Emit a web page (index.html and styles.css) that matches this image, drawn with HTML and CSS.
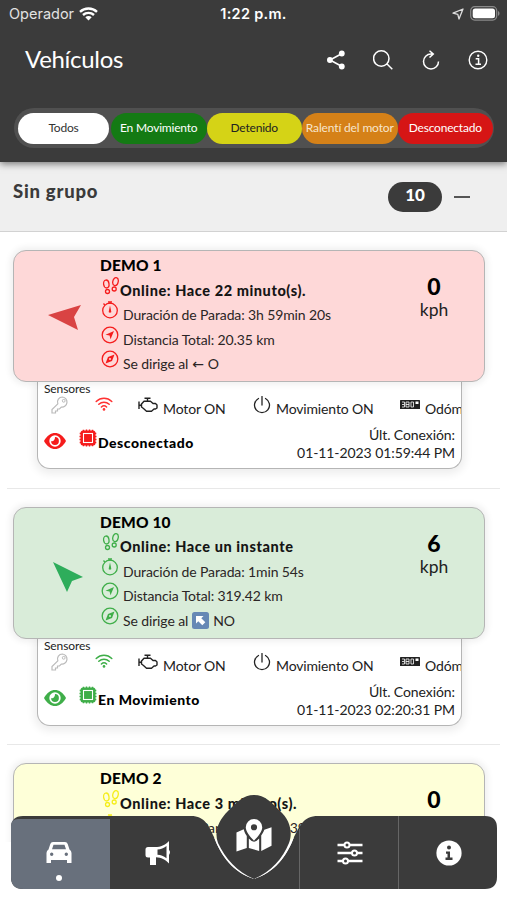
FILE: index.html
```
<!DOCTYPE html>
<html lang="es">
<head>
  <meta charset="UTF-8" />
  <meta name="viewport" content="width=device-width, initial-scale=1" />
  <title>Vehículos</title>
  <link rel="stylesheet" href="styles.css">
</head>
<body>
  <!-- Iconos compartidos -->
  <svg class="sprite" aria-hidden="true">
    <symbol id="steps" viewBox="0 0 18 18"><g fill="none" stroke="currentColor" stroke-width="1.3"><ellipse cx="4.3" cy="7" rx="2.7" ry="4" transform="rotate(-8 4.3 7)"/><circle cx="5.500" cy="14.500" r="2"/><ellipse cx="13.500" cy="4.600" rx="2.700" ry="4" transform="rotate(12 13.500 4.600)"/><circle cx="12.200" cy="12" r="2"/></g></symbol>
    <symbol id="timer" viewBox="0 0 18 18"><g fill="none" stroke="currentColor" stroke-width="1.3"><circle cx="9" cy="9.500" r="7.300"/><path d="M7 1h4M9 1v2M2.500 2.500l1.300 1.500" /></g><path d="M9 4.500l1.200 5.500a1.300 1.300 0 1 1-2.400 0z" fill="currentColor"/></symbol>
    <symbol id="distance" viewBox="0 0 18 18"><circle cx="9" cy="9" r="7.800" fill="none" stroke="currentColor" stroke-width="1.300"/><path d="M13 5L9.500 13.300 8.600 9.500 4.500 8.700z" fill="currentColor"/></symbol>
    <symbol id="compass" viewBox="0 0 18 18"><circle cx="9" cy="9" r="7.800" fill="none" stroke="currentColor" stroke-width="1.300"/><path fill-rule="evenodd" d="M13.500 4.500L11 11 4.500 13.500 7 7zM9 8a1 1 0 1 0 0 2 1 1 0 0 0 0-2z" fill="currentColor"/></symbol>
    <symbol id="key" viewBox="0 0 18 18"><path d="M11.500 1a5 5 0 0 0-4.700 6.800L1 13.600V17h3.500v-2H6.500v-2h2l1.800-1.900A5 5 0 1 0 11.500 1z" fill="none" stroke="currentColor" stroke-width="1.200"/><circle cx="12.700" cy="4.800" r="1.400" fill="none" stroke="currentColor"/></symbol>
    <symbol id="wifi" viewBox="0 0 18 14"><g fill="none" stroke="currentColor" stroke-width="1.500" stroke-linecap="round"><path d="M1.200 4.500c4.500-4.200 11.100-4.200 15.600 0M3.800 7.300c3-2.800 7.400-2.800 10.400 0M6.400 10c1.500-1.400 3.700-1.400 5.200 0"/></g><circle cx="9" cy="12.400" r="1.300" fill="currentColor"/></symbol>
    <symbol id="engine" viewBox="0 0 20 16"><path d="M6 4.200h6.500L15 6.500h2.500L19 8v3l-1.500 1H16l-2.500 2.200H8.500L5.500 11.500 3.500 10V7zM9.500 4V1.500M6.500 1.300h6M1 4.500v7.500M1 8.300h2.500" fill="none" stroke="currentColor" stroke-width="1.400" stroke-linejoin="round"/></symbol>
    <symbol id="power" viewBox="0 0 18 18"><path d="M5.500 2.500a7.500 7.500 0 1 0 7 0M9 .5v8.500" fill="none" stroke="currentColor" stroke-width="1.300" stroke-linecap="round"/></symbol>
    <symbol id="odometer" viewBox="0 0 20 10"><rect width="20" height="9" rx=".6" fill="currentColor"/><path d="M2 2h2.500v5H2M2 4.500h2M6 2h3v5H6zM6 4.500h3M11 2h2.500v5H11z" fill="none" stroke="#fff" stroke-width=".8"/><path d="M15.500 1.500h3v2.500h-3z" fill="#fff"/></symbol>
    <symbol id="eye" viewBox="0 0 22 16"><path d="M0 8C3 2.500 7 0 11 0s8 2.500 11 8c-3 5.500-7 8-11 8S3 13.500 0 8z" fill="currentColor"/><circle cx="11" cy="8" r="5.700" fill="#fff"/><path d="M11 4.100a3.900 3.900 0 1 1-3.900 3.900c1.800 1 4-.8 3.900-3.900z" fill="currentColor"/></symbol>
    <symbol id="chip" viewBox="0 0 18 18"><rect x="1.500" y="1.500" width="15" height="15" rx="2.500" fill="currentColor"/><path d="M4.500 .7v16.600M7.500 .5v17M10.500 .5v17M13.500 .7v16.600M.7 4.500h16.600M.5 7.500h17M.5 10.500h17M.7 13.500h16.600" stroke="currentColor" stroke-width="1.500"/><rect x="4.500" y="4.500" width="9" height="9" fill="currentColor" stroke="#fff" stroke-width="1.100"/></symbol>
  </svg>

  <div class="app">
    <header class="header">
      <div class="status-bar">
        <div class="carrier">Operador
          <svg width="19" height="14" viewBox="0 0 19 14"><g fill="none" stroke="#fff" stroke-width="2.400"><path d="M1 4.800c4.800-4.400 12.200-4.400 17 0M4 8c3.100-2.900 7.900-2.900 11 0"/></g><path d="M6.300 10.300c1.900-1.600 4.500-1.600 6.400 0L9.500 13.600z" fill="#fff"/></svg>
        </div>
        <div class="clock">1:22 p.m.</div>
        <div class="battery">
          <svg width="12" height="12" viewBox="0 0 12 12"><path d="M11 1L7 11 5.800 6.300 1 5.200z" fill="none" stroke="#ddd" stroke-width="1.300" stroke-linejoin="round"/></svg>
          <svg width="30" height="15" viewBox="0 0 30 15"><rect x=".7" y=".7" width="26" height="13.400" rx="4" fill="none" stroke="#8a8a8a" stroke-width="1.200"/><rect x="2.700" y="2.500" width="22.300" height="9.800" rx="2.500" fill="#fff"/><path d="M28 5c2 .8 2 4 0 4.800z" fill="#8a8a8a"/></svg>
        </div>
      </div>
      <div class="title-row">
        <h1>Vehículos</h1>
        <div class="actions">
          <svg width="20" height="20" viewBox="0 0 20 20"><path d="M16 3.500L4 10l12 6.500" fill="none" stroke="#fff" stroke-width="1.600"/><g fill="#fff"><circle cx="15.800" cy="3.500" r="2.900"/><circle cx="3.900" cy="10" r="2.900"/><circle cx="15.800" cy="16.500" r="2.900"/></g></svg>
          <svg width="20" height="20" viewBox="0 0 20 20"><path d="M13.800 13.800L19.300 19.300M16 8.500a7.700 7.700 0 1 1-15.400 0 7.700 7.700 0 0 1 15.400 0z" fill="none" stroke="#fff" stroke-width="1.500"/></svg>
          <svg width="20" height="20" viewBox="0 0 20 20"><path d="M11.500 4H10a7.500 7.500 0 1 0 7.500 7.500M8.500 .7L12.300 4 8.500 7.500" fill="none" stroke="#fff" stroke-width="1.500"/></svg>
          <svg width="20" height="20" viewBox="0 0 20 20"><circle cx="10" cy="10" r="8.800" fill="none" stroke="#fff" stroke-width="1.400"/><path d="M7.700 8.700h2.900v5.600M7.500 14.300h5.500" fill="none" stroke="#fff" stroke-width="1.500"/><circle cx="10.200" cy="5.700" r="1.200" fill="#fff"/></svg>
        </div>
      </div>
      <nav class="filters">
        <span class="filter all">Todos</span>
        <span class="filter moving">En Movimiento</span>
        <span class="filter stopped">Detenido</span>
        <span class="filter idle">Ralentí del motor</span>
        <span class="filter offline">Desconectado</span>
      </nav>
    </header>

    <section class="group">
      <h2>Sin grupo</h2>
      <span class="count">10</span>
      <span class="collapse"></span>
    </section>

    <main class="list">
      <!-- DEMO 1 -->
      <article class="vehicle red">
        <div class="summary">
          <div class="heading"><svg width="36" height="30" viewBox="0 0 36 30"><path d="M1 13L34 3 27 15 31 28z" fill="#d94343"/></svg></div>
          <div class="info">
            <h3>DEMO 1</h3>
            <p class="online"><svg><use href="#steps"/></svg>Online: Hace 22 minuto(s).</p>
            <p><svg><use href="#timer"/></svg>Duración de Parada: 3h 59min 20s</p>
            <p><svg><use href="#distance"/></svg>Distancia Total: 20.35 km</p>
            <p><svg><use href="#compass"/></svg>Se dirige al <span class="west">←</span> O</p>
          </div>
          <div class="speed"><b>0</b>kph</div>
        </div>
        <div class="details">
          <div class="label">Sensores</div>
          <div class="sensors">
            <svg class="key"><use href="#key"/></svg>
            <svg class="wifi"><use href="#wifi"/></svg>
            <svg class="engine"><use href="#engine"/></svg><span class="motor">Motor ON</span>
            <svg class="power"><use href="#power"/></svg><span class="motion">Movimiento ON</span>
            <svg class="odometer"><use href="#odometer"/></svg><span>Odóm</span>
          </div>
          <div class="state">
            <svg class="eye"><use href="#eye"/></svg>
            <svg class="chip"><use href="#chip"/></svg>
            <strong>Desconectado</strong>
            <div class="last">Últ. Conexión:<br>01-11-2023 01:59:44 PM</div>
          </div>
        </div>
      </article>

      <!-- DEMO 10 -->
      <article class="vehicle green">
        <div class="summary">
          <div class="heading"><svg width="36" height="36" viewBox="0 0 36 36"><path d="M4 3L34 18 23 22 18 33z" fill="#2ead5b"/></svg></div>
          <div class="info">
            <h3>DEMO 10</h3>
            <p class="online"><svg><use href="#steps"/></svg>Online: Hace un instante</p>
            <p><svg><use href="#timer"/></svg>Duración de Parada: 1min 54s</p>
            <p><svg><use href="#distance"/></svg>Distancia Total: 319.42 km</p>
            <p><svg><use href="#compass"/></svg>Se dirige al <svg class="northwest" viewBox="0 0 17 17"><rect width="17" height="17" rx="2.500" fill="#6688b5"/><path d="M4 4h7.500L9.300 6.200l4 4-3 3-4-4L4 11.500z" fill="#fff"/></svg> NO</p>
          </div>
          <div class="speed"><b>6</b>kph</div>
        </div>
        <div class="details">
          <div class="label">Sensores</div>
          <div class="sensors">
            <svg class="key"><use href="#key"/></svg>
            <svg class="wifi"><use href="#wifi"/></svg>
            <svg class="engine"><use href="#engine"/></svg><span class="motor">Motor ON</span>
            <svg class="power"><use href="#power"/></svg><span class="motion">Movimiento ON</span>
            <svg class="odometer"><use href="#odometer"/></svg><span>Odóm</span>
          </div>
          <div class="state">
            <svg class="eye"><use href="#eye"/></svg>
            <svg class="chip"><use href="#chip"/></svg>
            <strong>En Movimiento</strong>
            <div class="last">Últ. Conexión:<br>01-11-2023 02:20:31 PM</div>
          </div>
        </div>
      </article>

      <!-- DEMO 2 -->
      <article class="vehicle yellow">
        <div class="summary">
          <div class="heading"></div>
          <div class="info">
            <h3>DEMO 2</h3>
            <p class="online"><svg><use href="#steps"/></svg>Online: Hace 3 minuto(s).</p>
            <p><svg><use href="#timer"/></svg>Duración de Parada: 13min 39s</p>
          </div>
          <div class="speed"><b>0</b>kph</div>
        </div>
      </article>
    </main>

    <!-- Barra inferior -->
    <nav class="tabbar">
      <svg class="tabbar-shape" width="486" height="95" viewBox="0 0 486 95">
        <path d="M0 34Q0 22 12 22H180C194 22 198 32 203 43C210 62 222 78 243 85C264 78 276 62 283 43C289 32 292 22 307 22H474Q486 22 486 34V83Q486 95 474 95H12Q0 95 0 83z" fill="#3b3b3b"/>
        <path d="M0 32Q0 25 7 25H99V95H12Q0 95 0 83z" fill="#68707c"/>
        <path d="M203 43C210 62 222 78 243 85L207 47zM283 43C276 62 264 78 243 85L279 47z" fill="#fff"/>
        <path d="M243 1C254 1 260 8 269 17C279 26 282 38 278 49C272 64 260 78 243 85C226 78 214 64 207 49C203 38 207 27 217 17C226 8 232 1 243 1z" fill="#3b3b3b"/>
        <path d="M288.500 35V95M387.500 22V95" stroke="#666" stroke-width="1"/>
      </svg>
      <div class="tab active">
        <svg width="26" height="23" viewBox="0 0 26 23"><path fill-rule="evenodd" d="M7 1h12q2 0 2.700 2L23.500 8.500Q25.500 9.500 25.500 12v10h-4.500v-3H5v3H.5V12q0-2.500 2-3.500L4.300 3Q5 1 7 1zM7.500 3.700L6 8.300h14l-1.500-4.600zM5.700 11.500a1.700 1.700 0 1 0 0 3.400 1.700 1.700 0 0 0 0-3.400zM20.300 11.500a1.700 1.700 0 1 0 0 3.400 1.700 1.700 0 0 0 0-3.400z" fill="#fff"/></svg>
        <i class="dot"></i>
      </div>
      <div class="tab alerts">
        <svg width="26" height="26" viewBox="0 0 26 26"><path fill-rule="evenodd" d="M24 1v9q2 2 0 5v8.500C20 19.500 16.500 17.500 11 17.300V25H5v-7.500H3q-2.500 0-2.500-2.500V9.500Q.5 7 3 7h7C16 7 20 5 24 1zM21.500 6C18.500 8.500 16 9.300 12.500 9.500v5.200c3.500.2 6 1 9 3.500z" fill="#fff"/></svg>
      </div>
      <div class="tab map">
        <svg width="36" height="33" viewBox="0 0 34 32"><path d="M0 13l7-3c1 4 2 5 3 6.500V28L0 31.500zM12 19q5 6 10 0v12L12 28zM24 16c2-3 2.500-4 3-5.500L34 8v18l-10 5z" fill="#fff"/><path fill-rule="evenodd" d="M17 0a8 8 0 0 1 8 8c0 4-4 9-8 13-4-4-8-9-8-13a8 8 0 0 1 8-8zM17 5a3 3 0 1 0 0 6 3 3 0 0 0 0-6z" fill="#fff"/></svg>
      </div>
      <div class="tab settings">
        <svg width="26" height="24" viewBox="0 0 26 24"><path d="M.5 4h25M.5 12h25M.5 20h25" stroke="#fff" stroke-width="2.600"/><g fill="#3b3b3b" stroke="#fff" stroke-width="2"><circle cx="10" cy="4" r="2.500"/><circle cx="17.500" cy="12" r="2.500"/><circle cx="8.500" cy="20" r="2.500"/></g></svg>
      </div>
      <div class="tab">
        <svg width="26" height="26" viewBox="0 0 26 26"><circle cx="13" cy="13" r="12.600" fill="#fff"/><circle cx="13" cy="7.500" r="2" fill="#3b3b3b"/><path d="M10 11.500h4v6h2.500V20h-7v-2.500h2v-3.800H10z" fill="#3b3b3b"/></svg>
      </div>
    </nav>
  </div>
</body>
</html>
```
FILE: styles.css
```
body {
  margin: 0;
  background: #fff;
  font-family: Lato, "Liberation Sans", sans-serif;
  color: #222;
}
h1, h2, h3, p {
  margin: 0;
}
svg {
  display: block;
  flex: none;
}
.sprite {
  display: none;
}
.app {
  position: relative;
  height: 900px;
  display: flex;
  flex-direction: column;
  overflow: hidden;
}

/* Cabecera */
.header {
  height: 162px;
  flex: none;
  box-sizing: border-box;
  background: #3b3b3b;
  color: #fff;
  box-shadow: 0 2px 7px rgba(0,0,0,0.5);
  z-index: 1;
}
.status-bar {
  height: 27px;
  padding: 0 5px 0 9px;
  display: grid;
  grid-template-columns: 1fr auto 1fr;
  align-items: center;
  font-family: Inter, sans-serif;
  font-size: 14.5px;
}
.carrier {
  display: flex;
  align-items: center;
  gap: 5px;
  color: #e2e2e2;
}
.clock {
  font-weight: 600;
  padding-right: 4px;
  letter-spacing: 0.3px;
}
.battery {
  display: flex;
  justify-content: flex-end;
  align-items: center;
  gap: 6px;
  margin-right: 2px;
}
.title-row {
  height: 66px;
  padding: 0 19px 0 25px;
  display: flex;
  justify-content: space-between;
  align-items: center;
}
h1 {
  padding-bottom: 2px;
  font-size: 24px;
  font-weight: 400;
  line-height: 30px;
  letter-spacing: -0.3px;
}
.actions {
  display: flex;
  gap: 27.500px;
}
.filters {
  height: 40px;
  margin: 15px 13px 0 14px;
  padding: 5px 1px 4px 4px;
  box-sizing: border-box;
  display: flex;
  border-radius: 20px;
  background: #505050;
}
.filter {
  flex: 1 1 0;
  border-radius: 16px;
  font-size: 12px;
  line-height: 29px;
  text-align: center;
  white-space: nowrap;
  letter-spacing: -0.2px;
}
.all {
  flex: 0 0 91px;
  margin-right: 2px;
  background: #fff;
  color: #333;
}
.moving { background: #147a14; }
.stopped { background: #d5d316; color: #222; }
.idle { background: #d58118; color: #f7e5cc; letter-spacing: -0.15px; }
.offline { background: #d61515; }

/* Grupo */
.group {
  height: 70px;
  flex: none;
  box-sizing: border-box;
  padding: 0 37px 0 13px;
  display: flex;
  align-items: center;
  background: #efefef;
  border-bottom: 1px solid #d2d2d2;
}
h2 {
  flex: 1;
  padding-bottom: 12px;
  font-size: 18.5px;
  font-weight: 900;
  line-height: 24px;
  letter-spacing: 0.75px;
  color: #3b3b3b;
}
.count {
  width: 54px;
  height: 30px;
  border-radius: 15px;
  background: #3b3b3b;
  color: #fff;
  font-size: 17px;
  font-weight: 900;
  line-height: 26px;
  text-align: center;
}
.collapse {
  width: 16px;
  height: 2px;
  margin-left: 12px;
  background: #555;
}

/* Lista */
.list {
  height: 610px;
  flex: none;
  overflow: hidden;
}
.vehicle {
  height: 256.500px;
  margin: 0 7px;
  padding: 18px 15px 0 6px;
  box-sizing: border-box;
}
.vehicle + .vehicle::before {
  content: "";
  display: block;
  height: 1px;
  margin: -19px -15px 18px -6px;
  background: #e8e8e8;
}
.summary {
  position: relative;
  z-index: 1;
  height: 132px;
  box-sizing: border-box;
  display: flex;
  border: 1.500px solid #b5b5b5;
  border-radius: 13px;
  box-shadow: 0 0 6px 3px rgba(0,0,0,0.06);
}
.red { color: #f51c1c; }
.red .summary { background: #fed8d8; }
.green { color: #3fae49; }
.green .summary { background: #d9ecd9; }
.yellow { color: #f5ee1b; }
.yellow .summary { background: #feffd8; }
.heading {
  width: 86px;
  display: flex;
  justify-content: center;
  padding: 2px 0 0 16px;
  box-sizing: border-box;
  align-items: center;
}
.green .heading {
  padding: 8px 0 0 20px;
}
.info {
  flex: 1;
  padding-top: 2px;
}
h3 {
  height: 25px;
  font-size: 15.5px;
  font-weight: 900;
  line-height: 24px;
  letter-spacing: 0.15px;
  color: #000;
}
.info p {
  height: 24.500px;
  display: flex;
  align-items: center;
  gap: 4px;
  padding-left: 1px;
  font-size: 14px;
  letter-spacing: -0.12px;
  color: #2b2525;
  white-space: nowrap;
}
.info p > svg:first-child {
  width: 18px;
  height: 18px;
  margin-top: -9px;
}
.red p > svg { color: #f51c1c; }
.green p > svg { color: #3fae49; }
.yellow p > svg { color: #f5ee1b; }
.info .online {
  gap: 0;
  padding-left: 2px;
  font-size: 14.5px;
  font-weight: 900;
  letter-spacing: 0.58px;
  color: #151515;
}
.northwest {
  width: 17px;
  height: 17px;
}
.west {
  font-family: "DejaVu Sans", sans-serif;
}
.speed {
  width: 100px;
  padding-top: 22px;
  box-sizing: border-box;
  text-align: center;
  font-size: 17.5px;
  line-height: 20px;
  color: #222;
}
.speed b {
  display: block;
  font-size: 23px;
  font-weight: 900;
  line-height: 27px;
  color: #000;
}
.details {
  height: 87px;
  margin: 0 23px 0 24px;
  padding: 0 6px 0 6px;
  box-sizing: border-box;
  overflow: hidden;
  border: 1.500px solid #b5b5b5;
  border-top: 0;
  border-radius: 0 0 13px 13px;
  background: #fff;
  box-shadow: 0 2px 8px 3px rgba(0,0,0,0.07);
}
.label {
  height: 14px;
  font-size: 12px;
  line-height: 14px;
  letter-spacing: -0.1px;
  color: #222;
}
.sensors {
  height: 30px;
  display: flex;
  /* el último sensor se sale por la derecha */
  margin-right: -6px;
  overflow: hidden;
  font-size: 14px;
  line-height: 26px;
  letter-spacing: -0.15px;
  color: #222;
  white-space: nowrap;
}
.key { width: 18px; height: 18px; margin: 0 0 0 7px; color: #bbb; }
.wifi { width: 18px; height: 14px; margin: 1px 0 0 26px; }
.red .wifi { color: #f33; }
.green .wifi { color: #3fae49; }
.engine { width: 20px; height: 16px; margin: 1px 5px 0 25px; }
.power { width: 18px; height: 18px; margin: 0 5px 0 0; }
.odometer { width: 20px; height: 10px; margin: 4px 5px 0 0; }
.motor { flex: none; width: 90px; }
.motion { flex: none; width: 124px; }
.state {
  display: flex;
}
.eye { width: 22px; height: 16px; margin-top: 7px; }
.chip { width: 18px; height: 18px; margin: 3px 1px 0 13px; }
.state strong {
  flex: 1;
  font-size: 14px;
  font-weight: 900;
  line-height: 34px;
  letter-spacing: 0.5px;
  color: #000;
}
.last {
  font-size: 14px;
  line-height: 18px;
  letter-spacing: -0.08px;
  text-align: right;
  color: #222;
}

/* Barra de navegación, flota sobre la lista */
.tabbar {
  position: absolute;
  left: 11px;
  bottom: 11px;
  z-index: 2;
  width: 486px;
  height: 95px;
  display: flex;
  padding-top: 22px;
  box-sizing: border-box;
}
.tabbar-shape {
  position: absolute;
  left: 0;
  top: 0;
}
.tab {
  position: relative;
  flex: 1;
  display: flex;
  justify-content: center;
  align-items: center;
  box-sizing: border-box;
}
.alerts {
  padding-left: 4px;
}
.settings {
  padding-right: 4px;
}
.map {
  padding-bottom: 34px;
}
.dot {
  position: absolute;
  bottom: 8px;
  width: 6px;
  height: 6px;
  border-radius: 50%;
  background: #fff;
}
```
